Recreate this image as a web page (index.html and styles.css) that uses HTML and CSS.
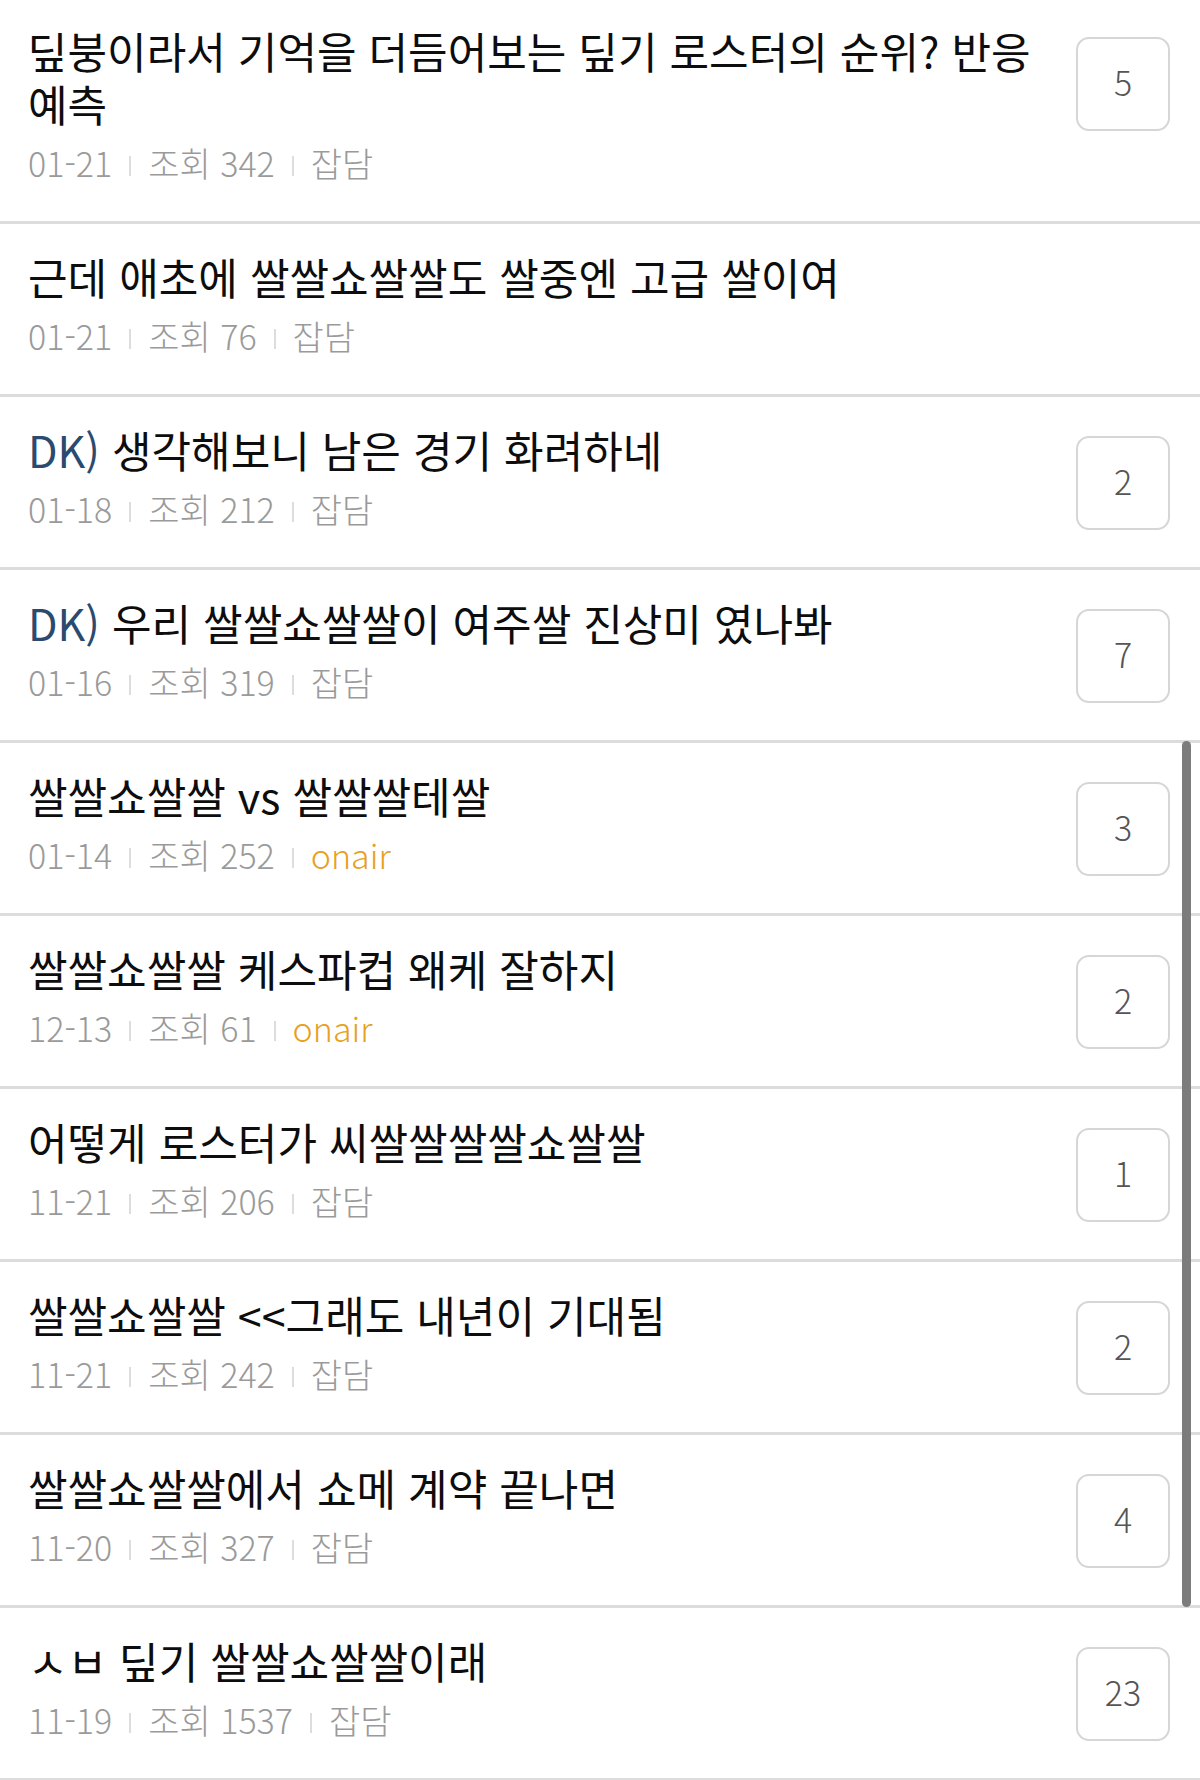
FILE: index.html
```html
<!DOCTYPE html>
<html lang="ko">
<head>
  <meta charset="UTF-8" />
  <meta name="viewport" content="width=device-width, initial-scale=1.0"/>
  <title>잡담 게시판</title>
  <link rel="stylesheet" href="styles.css">
</head>
<body>
  <div id="board">
    <ul class="post-list">
      <li class="post">
        <div class="post-body">
          <p class="post-title">딮붕이라서 기억을 더듬어보는 딮기 로스터의 순위? 반응 예측</p>
          <p class="post-meta"><span>01-21</span><i class="sep"></i><span>조회 342</span><i class="sep"></i><span>잡담</span></p>
        </div>
        <div class="reply-count">5</div>
      </li>
      <li class="post">
        <div class="post-body">
          <p class="post-title">근데 애초에 쌀쌀쇼쌀쌀도 쌀중엔 고급 쌀이여</p>
          <p class="post-meta"><span>01-21</span><i class="sep"></i><span>조회 76</span><i class="sep"></i><span>잡담</span></p>
        </div>
      </li>
      <li class="post">
        <div class="post-body">
          <p class="post-title"><span class="tag">DK)</span> 생각해보니 남은 경기 화려하네</p>
          <p class="post-meta"><span>01-18</span><i class="sep"></i><span>조회 212</span><i class="sep"></i><span>잡담</span></p>
        </div>
        <div class="reply-count">2</div>
      </li>
      <li class="post">
        <div class="post-body">
          <p class="post-title"><span class="tag">DK)</span> 우리 쌀쌀쇼쌀쌀이 여주쌀 진상미 였나봐</p>
          <p class="post-meta"><span>01-16</span><i class="sep"></i><span>조회 319</span><i class="sep"></i><span>잡담</span></p>
        </div>
        <div class="reply-count">7</div>
      </li>
      <li class="post">
        <div class="post-body">
          <p class="post-title">쌀쌀쇼쌀쌀 vs 쌀쌀쌀테쌀</p>
          <p class="post-meta"><span>01-14</span><i class="sep"></i><span>조회 252</span><i class="sep"></i><span class="onair">onair</span></p>
        </div>
        <div class="reply-count">3</div>
      </li>
      <li class="post">
        <div class="post-body">
          <p class="post-title">쌀쌀쇼쌀쌀 케스파컵 왜케 잘하지</p>
          <p class="post-meta"><span>12-13</span><i class="sep"></i><span>조회 61</span><i class="sep"></i><span class="onair">onair</span></p>
        </div>
        <div class="reply-count">2</div>
      </li>
      <li class="post">
        <div class="post-body">
          <p class="post-title">어떻게 로스터가 씨쌀쌀쌀쌀쇼쌀쌀</p>
          <p class="post-meta"><span>11-21</span><i class="sep"></i><span>조회 206</span><i class="sep"></i><span>잡담</span></p>
        </div>
        <div class="reply-count">1</div>
      </li>
      <li class="post">
        <div class="post-body">
          <p class="post-title">쌀쌀쇼쌀쌀 &lt;&lt;그래도 내년이 기대됨</p>
          <p class="post-meta"><span>11-21</span><i class="sep"></i><span>조회 242</span><i class="sep"></i><span>잡담</span></p>
        </div>
        <div class="reply-count">2</div>
      </li>
      <li class="post">
        <div class="post-body">
          <p class="post-title">쌀쌀쇼쌀쌀에서 쇼메 계약 끝나면</p>
          <p class="post-meta"><span>11-20</span><i class="sep"></i><span>조회 327</span><i class="sep"></i><span>잡담</span></p>
        </div>
        <div class="reply-count">4</div>
      </li>
      <li class="post">
        <div class="post-body">
          <p class="post-title">ㅅㅂ 딮기 쌀쌀쇼쌀쌀이래</p>
          <p class="post-meta"><span>11-19</span><i class="sep"></i><span>조회 1537</span><i class="sep"></i><span>잡담</span></p>
        </div>
        <div class="reply-count">23</div>
      </li>
    </ul>
    <div class="scroll-thumb"></div>
  </div>
</body>
</html>
```

FILE: styles.css
```css
* {
  box-sizing: border-box;
  font-family: 'Noto Sans CJK KR', 'Noto Sans', sans-serif;
}

body {
  margin: 0;
  padding: 0;
  background: #fff;
  color: #111;
  overflow: hidden;
}

#board {
  position: relative;
  width: 1200px;
}

.post-list {
  list-style-type: none;
  margin: -2px 0 0;
  padding: 0;
}

.post {
  display: flex;
  justify-content: space-between;
  align-items: flex-start;
  gap: 40px;
  padding: 26px 30px 35px 28px;
  border-bottom: 3px solid #dcdcdc;
}

.post-body {
  flex: 1;
  min-width: 0;
}

.post-title {
  margin: 0;
  font-size: 43px;
  line-height: 53px;
  color: #0d0d0d;
}

.tag {
  color: #2b4a6f;
}

.post-meta {
  display: flex;
  align-items: center;
  margin: 10px 0 0;
  font-size: 34px;
  font-weight: 300;
  line-height: 46px;
  color: #9a9a9a;
}

.sep {
  display: inline-block;
  width: 2px;
  height: 20px;
  margin: 6px 17px 0;
  background: #ddd;
}

.onair {
  color: #e8a020;
}

.reply-count {
  flex: none;
  width: 94px;
  height: 94px;
  margin-top: 13px;
  padding-bottom: 6px;
  border: 2px solid #d6d6d6;
  border-radius: 13px;
  display: flex;
  justify-content: center;
  align-items: center;
  font-size: 34px;
  font-weight: 300;
  color: #555;
}

.scroll-thumb {
  position: absolute;
  top: 743px;
  left: 1182px;
  width: 9px;
  height: 866px;
  border-radius: 5px;
  background: #7c7c7c;
}
```
